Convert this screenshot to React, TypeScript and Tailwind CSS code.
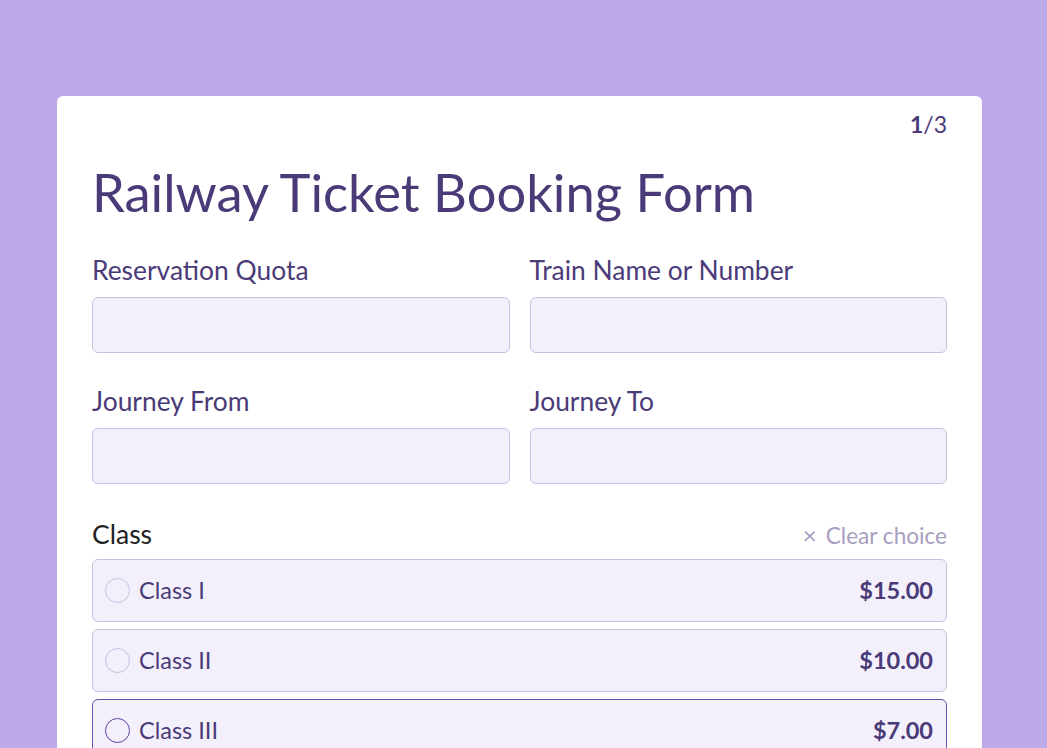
export default function App() {
  const options = [
    { name: "Class I", price: "$15.00", active: false },
    { name: "Class II", price: "$10.00", active: false },
    { name: "Class III", price: "$7.00", active: true },
  ];
  return (
    <div
      className="min-h-screen bg-[#bda9e7] pt-[96px] pl-[57px] pr-[65px] overflow-hidden"
      style={{ fontFamily: "Lato, 'Noto Sans', sans-serif" }}
    >
      <div className="bg-white rounded-[6px] px-[35px] pt-[12px] pb-10 h-[700px]">
        <div className="flex justify-end text-[23px] text-[#4a3b78] leading-[32px]">
          <span className="font-bold">1</span>/3
        </div>
        <h1 className="text-[52.5px] leading-[64px] text-[#4a3b78] mt-[20px]">Railway Ticket Booking Form</h1>
        <div className="grid grid-cols-2 gap-x-5 gap-y-[32px] mt-[30px]">
          {["Reservation Quota", "Train Name or Number", "Journey From", "Journey To"].map((label) => (
            <div key={label} className="flex flex-col">
              <label className="text-[26.4px] leading-[32px] text-[#4a3b78]">{label}</label>
              <input className="mt-[11px] h-[56px] rounded-[6px] border border-[#c9bfe2] bg-[#f3f0fc] outline-none" />
            </div>
          ))}
        </div>
        <div className="flex items-start justify-between mt-[32px]">
          <span className="translate-y-[2px] text-[26.5px] leading-[32px] text-[#222222]">Class</span>
          <span className="translate-y-[3px] text-[22.6px] leading-[32px] text-[#a89fc0]">
            <span className="mr-[9px] text-[24px]">×</span>Clear choice
          </span>
        </div>
        <div className="flex flex-col gap-[7px] mt-[10px]">
          {options.map((o) => (
            <div
              key={o.name}
              className={`flex items-center h-[63px] rounded-[6px] border bg-[#f3f0fc] pl-[12px] pr-[13px] ${
                o.active ? "border-[#6a4fb5]" : "border-[#c9bfe2]"
              }`}
            >
              <span
                className={`w-[25px] h-[25px] rounded-full border ${
                  o.active ? "border-[#5b44a0] border-[1.5px]" : "border-[#c9bfe2]"
                }`}
              />
              <span className="ml-[9px] text-[23.5px] text-[#4a3b78]">{o.name}</span>
              <span className="ml-auto text-[23.5px] font-bold text-[#4a3b78]">{o.price}</span>
            </div>
          ))}
        </div>
      </div>
    </div>
  );
}
